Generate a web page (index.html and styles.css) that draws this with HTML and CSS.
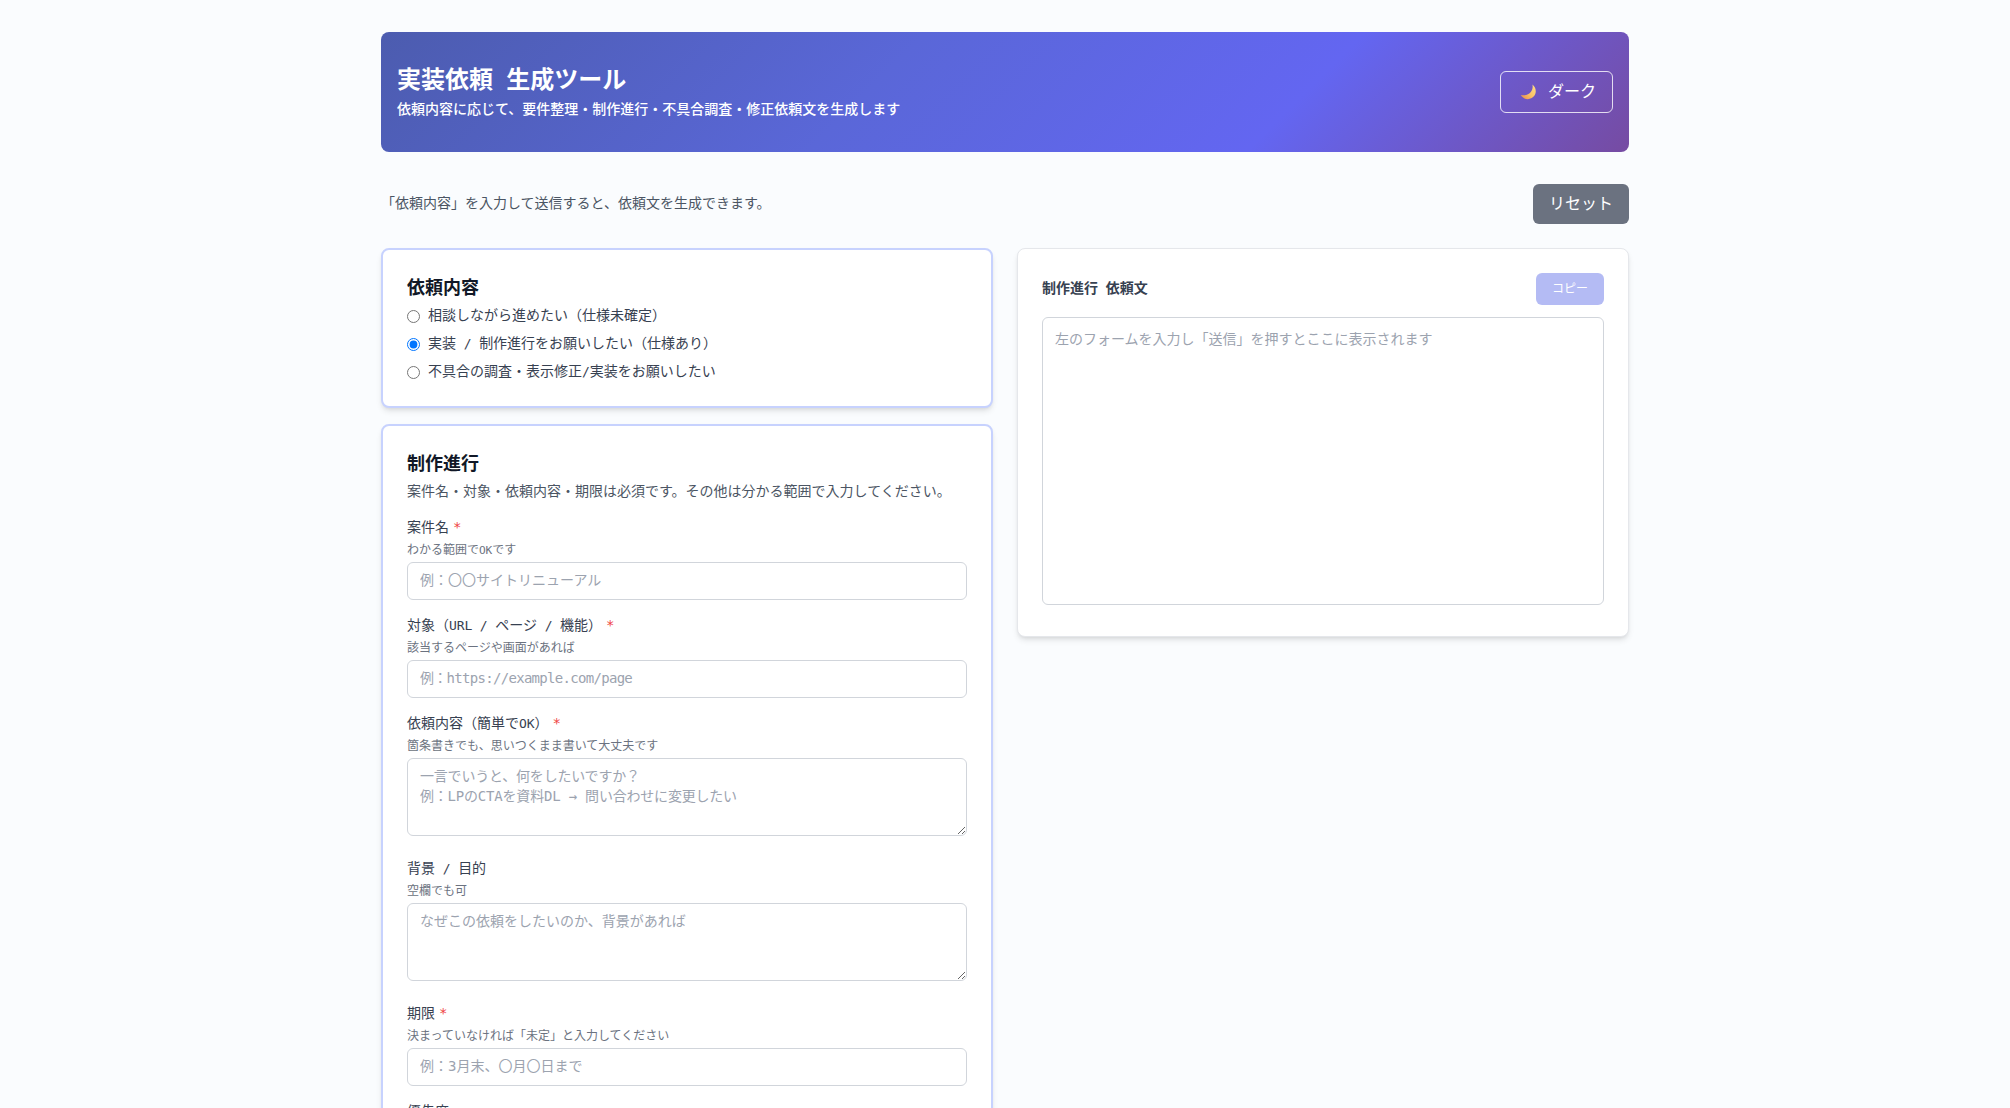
FILE: index.html
```html
<!DOCTYPE html>
<html lang="ja">
<head>
    <meta charset="UTF-8">
    <meta name="viewport" content="width=device-width, initial-scale=1.0">
    <title>実装依頼 生成ツール</title>
    <link rel="stylesheet" href="styles.css">
</head>
<body>
    <div class="container">
        <header class="header">
            <div>
                <h1>実装依頼<span class="sp"> </span>生成ツール</h1>
                <p class="lead">依頼内容に応じて、要件整理・制作進行・不具合調査・修正依頼文を生成します</p>
            </div>
            <button type="button" class="theme-toggle">
                <svg class="moon" viewBox="0 0 16 16" width="16" height="16">
                    <defs>
                        <linearGradient id="moon-fill" x1="1" y1="0" x2="0" y2="1">
                            <stop offset="0" stop-color="#ffe08a"/>
                            <stop offset="0.5" stop-color="#fcc468"/>
                            <stop offset="1" stop-color="#e98a4a"/>
                        </linearGradient>
                    </defs>
                    <path d="M12.4 0.6C16.2 3.6 16.8 8.6 14.1 12.1C10.8 16.3 4 16.4 0.8 11C4.7 12 8.9 10.8 11 7.8C12.6 5.5 13 3 12.4 0.6Z" fill="url(#moon-fill)"/>
                </svg>
                <span>ダーク</span>
            </button>
        </header>

        <div class="toolbar">
            <p>「依頼内容」を入力して送信すると、依頼文を生成できます。</p>
            <button type="button" class="reset">リセット</button>
        </div>

        <main class="columns">
            <form class="forms">
                <section class="card">
                    <h2>依頼内容</h2>
                    <div class="choices">
                        <label><input type="radio" name="kind"><span>相談しながら進めたい（仕様未確定）</span></label>
                        <label><input type="radio" name="kind" checked><span>実装<span class="en"> / </span>制作進行をお願いしたい（仕様あり）</span></label>
                        <label><input type="radio" name="kind"><span>不具合の調査・表示修正<span class="en">/</span>実装をお願いしたい</span></label>
                    </div>
                </section>

                <section class="card">
                    <h2>制作進行</h2>
                    <p class="desc">案件名・対象・依頼内容・期限は必須です。その他は分かる範囲で入力してください。</p>

                    <div class="field">
                        <label for="name">案件名<span class="req">*</span></label>
                        <p class="hint">わかる範囲で<span class="en">OK</span>です</p>
                        <input type="text" id="name" placeholder="例：〇〇サイトリニューアル">
                    </div>
                    <div class="field">
                        <label for="target">対象（<span class="en">URL / </span>ページ<span class="en"> / </span>機能）<span class="req">*</span></label>
                        <p class="hint">該当するページや画面があれば</p>
                        <input type="text" id="target" class="url" placeholder="例：https://example.com/page">
                    </div>
                    <div class="field">
                        <label for="request">依頼内容（簡単で<span class="en">OK</span>）<span class="req">*</span></label>
                        <p class="hint">箇条書きでも、思いつくまま書いて大丈夫です</p>
                        <textarea id="request" class="mixed" rows="3" placeholder="一言でいうと、何をしたいですか？&#10;例：LPのCTAを資料DL → 問い合わせに変更したい"></textarea>
                    </div>
                    <div class="field">
                        <label for="purpose">背景<span class="en"> / </span>目的</label>
                        <p class="hint">空欄でも可</p>
                        <textarea id="purpose" rows="3" placeholder="なぜこの依頼をしたいのか、背景があれば"></textarea>
                    </div>
                    <div class="field">
                        <label for="deadline">期限<span class="req">*</span></label>
                        <p class="hint">決まっていなければ「未定」と入力してください</p>
                        <input type="text" id="deadline" placeholder="例：3月末、〇月〇日まで">
                    </div>
                    <div class="field">
                        <label for="priority">優先度</label>
                        <input type="text" id="priority">
                    </div>
                </section>
            </form>

            <section class="card output">
                <div class="output-head">
                    <h3>制作進行<span class="sp"> </span>依頼文</h3>
                    <button type="button" class="copy" disabled>コピー</button>
                </div>
                <textarea class="result" readonly placeholder="左のフォームを入力し「送信」を押すとここに表示されます"></textarea>
            </section>
        </main>
    </div>
</body>
</html>
```
FILE: styles.css
```css
* {
    box-sizing: border-box;
}

html {
    overflow: hidden;
}

body {
    margin: 0;
    height: 1108px;
    overflow: hidden;
    background-color: #fafcfe;
    color: #374151;
    font-family: "Liberation Mono", "Noto Sans CJK JP", monospace;
    font-size: 14px;
    line-height: 20px;
}

h1, h2, h3, p {
    margin: 0;
}

h1, h2, button, .hint, input, textarea {
    font-family: "DejaVu Sans Mono", "Noto Sans CJK JP", monospace;
}

.container {
    width: 1248px;
    margin: 0 auto;
    padding-top: 32px;
}

.header {
    display: flex;
    justify-content: space-between;
    align-items: center;
    height: 120px;
    padding: 0 16px;
    border-radius: 8px;
    color: #fff;
    background: linear-gradient(135deg, #4c5caf 0%, #5a67d8 40%, #6366f1 72%, #764ba2 100%);
}

.header h1 {
    font-size: 24px;
    line-height: 32px;
}

.header .lead {
    margin-top: 4px;
    font-weight: 500;
}

/* half-width text */
.en {
    font-family: "DejaVu Sans Mono", monospace;
    font-size: 0.93em;
    letter-spacing: -0.01em;
    white-space: pre;
    line-height: 1;
}

.sp {
    display: inline-block;
    width: 0.55em;
}

.theme-toggle {
    display: flex;
    align-items: center;
    gap: 12px;
    height: 42px;
    padding: 0 16px 0 19px;
    border: 1px solid rgba(255, 255, 255, 0.8);
    border-radius: 6px;
    background: transparent;
    color: #fff;
    font-size: 16px;
    line-height: 24px;
}

.toolbar {
    display: flex;
    justify-content: space-between;
    align-items: center;
    margin: 32px 0 24px;
    color: #4b5563;
}

.reset {
    height: 40px;
    padding: 0 16px;
    border: none;
    border-radius: 6px;
    background-color: #6b7280;
    color: #fff;
    font-size: 16px;
    line-height: 24px;
}

.columns {
    display: grid;
    grid-template-columns: 1fr 1fr;
    gap: 24px;
    align-items: start;
}

.forms {
    display: flex;
    flex-direction: column;
    gap: 16px;
}

.card {
    padding: 24px;
    border: 2px solid #c7d2fe;
    border-radius: 8px;
    background-color: #fff;
    box-shadow: 0 4px 6px -1px rgba(0, 0, 0, 0.1), 0 2px 4px -2px rgba(0, 0, 0, 0.1);
}

.card h2 {
    color: #111827;
    font-size: 18px;
    line-height: 28px;
}

.choices {
    display: flex;
    flex-direction: column;
    gap: 8px;
    margin-top: 4px;
}

.choices label {
    display: flex;
    align-items: center;
    gap: 8px;
    height: 20px;
}

.choices input {
    width: 13px;
    height: 13px;
    margin: 1px 0 0;
}

.desc {
    margin-top: 4px;
    color: #4b5563;
}

.field {
    margin-top: 16px;
}

.field label {
    display: block;
    height: 20px;
}

.req {
    margin-left: 4px;
    color: #ef4444;
    font-family: "DejaVu Sans Mono", monospace;
    line-height: 1;
}

.hint {
    height: 16px;
    margin: 4px 0;
    color: #6b7280;
    font-size: 12px;
    line-height: 16px;
}

input[type="text"], textarea {
    display: block;
    width: 100%;
    padding: 7px 12px 9px;
    border: 1px solid #d1d5db;
    border-radius: 6px;
    background-color: #fff;
    color: #374151;
    font-size: 14px;
    line-height: 20px;
}

input[type="text"] {
    height: 38px;
}

textarea {
    margin-bottom: 23px;
}

input::placeholder, textarea::placeholder {
    color: #9ca3af;
    opacity: 1;
}

.url::placeholder {
    letter-spacing: -0.7px;
}

.mixed::placeholder {
    letter-spacing: -0.2px;
}

.output {
    border: 1px solid #e5e7eb;
}

.output-head {
    display: flex;
    justify-content: space-between;
    align-items: center;
    margin-bottom: 12px;
}

.output-head h3 {
    font-size: 14px;
    line-height: 20px;
}

.copy {
    height: 32px;
    padding: 0 16px;
    border: none;
    border-radius: 6px;
    background-color: #6b79eb;
    color: #fff;
    font-size: 12px;
    line-height: 16px;
    opacity: 0.5;
}

.result {
    height: 288px;
    margin-bottom: 7px;
    padding: 11px 12px;
    resize: none;
}
```
